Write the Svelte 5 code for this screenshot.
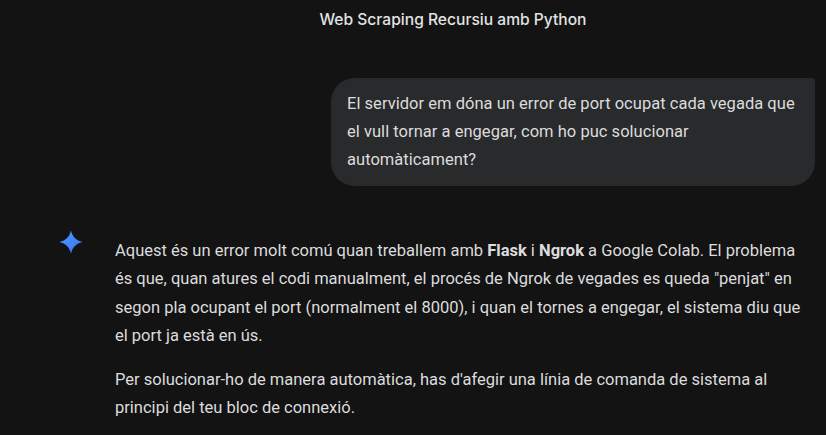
<script>
  const title = 'Web Scraping Recursiu amb Python';
</script>

<main class="chat">
  <header class="top">{title}</header>

  <section class="user-row">
    <div class="bubble">
      El servidor em dóna un error de port ocupat cada vegada que<br />
      el vull tornar a engegar, com ho puc solucionar<br />
      automàticament?
    </div>
  </section>

  <section class="reply">
    <svg class="spark" viewBox="0 0 24 24" width="24" height="24" aria-hidden="true">
      <defs>
        <linearGradient id="sparkfill" x1="0" y1="0" x2="1" y2="1">
          <stop offset="0" stop-color="#4f9bff" />
          <stop offset="1" stop-color="#3574f0" />
        </linearGradient>
      </defs>
      <path
        fill="url(#sparkfill)"
        d="M12 .5C13.6 7 17 10.4 23.5 12 17 13.6 13.6 17 12 23.5 10.4 17 7 13.6 .5 12 7 10.4 10.4 7 12 .5Z"
      />
    </svg>
    <div class="text">
      <p>
        Aquest és un error molt comú quan treballem amb <b>Flask</b> i <b>Ngrok</b> a Google Colab. El problema<br />
        és que, quan atures el codi manualment, el procés de Ngrok de vegades es queda "penjat" en<br />
        segon pla ocupant el port (normalment el 8000), i quan el tornes a engegar, el sistema diu que<br />
        el port ja està en ús.
      </p>
      <p>
        Per solucionar-ho de manera automàtica, has d'afegir una línia de comanda de sistema al<br />
        principi del teu bloc de connexió.
      </p>
    </div>
  </section>
</main>

<style>
  :global(body) {
    margin: 0;
    background: #131314;
    overflow: hidden;
  }

  .chat {
    height: 435px;
    overflow: hidden;
    color: #dcdcdc;
    font-family: Roboto, "Noto Sans", sans-serif;
    font-size: 16.5px;
    line-height: 28px;
  }

  .top {
    padding: 7px 0 0 80px;
    height: 78px;
    box-sizing: border-box;
    text-align: center;
    color: #e3e3e3;
    font-family: Inter, Roboto, sans-serif;
    font-size: 15.6px;
    font-weight: 500;
    line-height: 26px;
  }

  .user-row {
    display: flex;
    justify-content: flex-end;
    padding-right: 11px;
  }

  .bubble {
    background: #282a2c;
    border-radius: 24px 4px 24px 24px;
    padding: 12px 16px;
    width: 484px;
    box-sizing: border-box;
    white-space: nowrap;
    letter-spacing: 0.03px;
  }

  .reply {
    display: flex;
    margin-top: 51px;
    padding-left: 59px;
    gap: 32px;
  }

  .spark {
    flex: none;
    margin-top: -7px;
  }

  .text {
    width: 700px;
    line-height: 28.4px;
    white-space: nowrap;
  }

  p {
    margin: 0 0 15px;
  }

  b {
    font-weight: 700;
  }
</style>
